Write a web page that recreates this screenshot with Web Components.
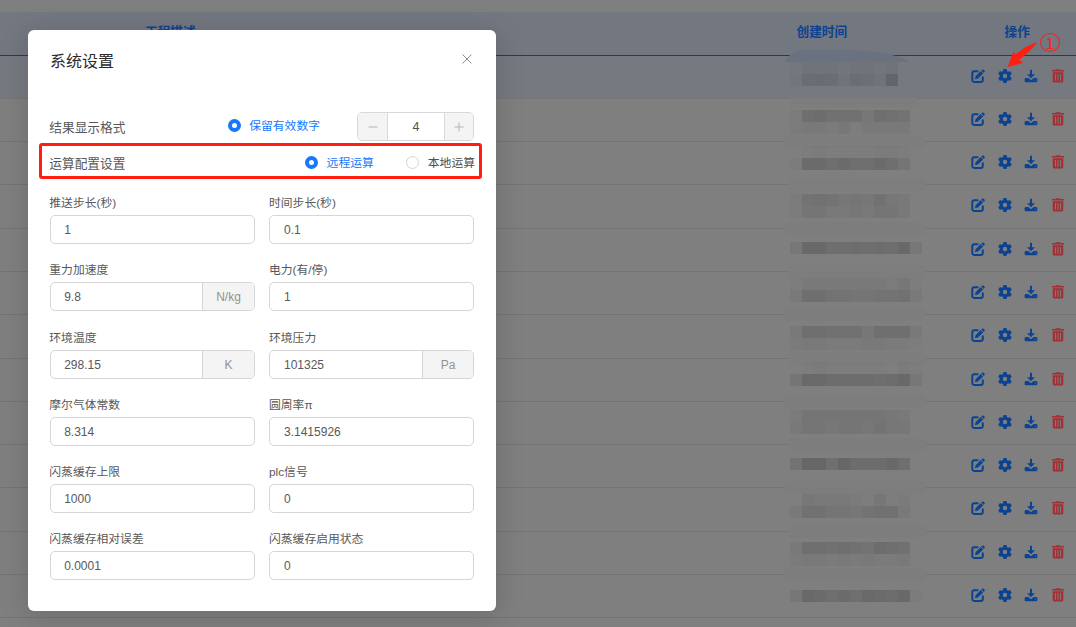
<!DOCTYPE html>
<html lang="zh-CN">
<head>
<meta charset="utf-8">
<title>系统设置</title>
<style>
html,body{margin:0;width:1076px;height:627px;overflow:hidden;background:#7f7f7f}
body{font-family:"Liberation Sans","Noto Sans CJK SC",sans-serif}
</style>
</head>
<body>
<settings-page></settings-page>
<script>
const define = (name, html, setup) => customElements.define(name, class extends HTMLElement {
  connectedCallback() {
    if (this.shadowRoot) return;
    const t = document.createElement('template');
    t.innerHTML = typeof html === 'function' ? html(this) : html;
    this.attachShadow({mode: 'open'}).append(t.content.cloneNode(true));
    if (setup) setup(this);
  }
});

const GLYPHS = {
  edit: '<svg viewBox="0 0 14 14"><path d="M6.600 2.300H3.200A2 2 0 0 0 1.300 4.300V11A2 2 0 0 0 3.200 12.900H9.800A2 2 0 0 0 11.800 11V8.300" fill="none" stroke="currentColor" stroke-width="2" stroke-linecap="round"/><path d="M3.900 10.300L4.600 7.200 9.700 2.100 12.100 4.500 7 9.600ZM10.300 1.500L11 .8Q11.900 0 12.700.8L13.400 1.500Q14.200 2.300 13.400 3.200L12.700 3.900Z" fill="currentColor"/></svg>',
  gear: '<svg viewBox="0 0 512 512"><path fill="currentColor" fill-rule="evenodd" d="M495.900 166.600c3.200 8.700 .5 18.400-6.400 24.600l-43.300 39.400c1.100 8.300 1.700 16.800 1.700 25.400s-.6 17.100-1.700 25.400l43.300 39.400c6.900 6.200 9.600 15.900 6.400 24.600c-4.400 11.900-9.700 23.300-15.800 34.300l-4.700 8.100c-6.600 11-14 21.400-22.100 31.200c-5.900 7.200-15.700 9.600-24.500 6.800l-55.700-17.700c-13.400 10.300-28.200 18.900-44 25.400l-12.500 57.100c-2 9.100-9 16.300-18.200 17.800c-13.800 2.300-28 3.500-42.500 3.500s-28.700-1.200-42.500-3.500c-9.200-1.500-16.200-8.700-18.200-17.800l-12.500-57.100c-15.800-6.500-30.600-15.100-44-25.400L83.100 425.900c-8.800 2.800-18.600 .3-24.500-6.800c-8.100-9.800-15.500-20.200-22.100-31.200l-4.700-8.100c-6.100-11-11.400-22.400-15.800-34.300c-3.200-8.700-.5-18.400 6.400-24.600l43.300-39.400C64.600 273.100 64 264.600 64 256s.6-17.100 1.700-25.400L22.400 191.200c-6.900-6.200-9.600-15.900-6.400-24.600c4.400-11.900 9.700-23.300 15.800-34.300l4.700-8.100c6.600-11 14-21.400 22.100-31.200c5.900-7.200 15.700-9.600 24.500-6.800l55.700 17.700c13.400-10.300 28.200-18.900 44-25.400l12.500-57.100c2-9.100 9-16.300 18.200-17.800C227.300 1.200 241.500 0 256 0s28.700 1.200 42.500 3.500c9.200 1.500 16.200 8.700 18.200 17.800l12.500 57.100c15.800 6.500 30.600 15.100 44 25.400l55.700-17.700c8.800-2.800 18.600-.3 24.500 6.800c8.100 9.800 15.500 20.200 22.100 31.200l4.700 8.100c6.100 11 11.400 22.400 15.800 34.300zM256 336a80 80 0 1 0 0-160 80 80 0 1 0 0 160z"/></svg>',
  download: '<svg viewBox="0 0 14 14"><path d="M6 .7H8V5.300H11L7 9.300 3 5.300H6Z" fill="currentColor"/><path fill-rule="evenodd" d="M2 9H4.300L7 11.200 9.700 9H12Q13.400 9 13.400 10.200V12Q13.400 13.300 12 13.300H2Q.6 13.300.6 12V10.200Q.6 9 2 9ZM10.900 10.700V11.500H11.900V10.700Z" fill="currentColor"/></svg>',
  trash: '<svg viewBox="0 0 14 14"><path d="M1 1H4.300L4.900.3H9.100L9.700 1H13V2.400H1Z" fill="currentColor"/><path fill-rule="evenodd" d="M1.700 3.200H12.300V12Q12.300 13.500 10.800 13.500H3.200Q1.700 13.500 1.700 12ZM4 5V11.700H4.900V5ZM6.550 5V11.700H7.450V5ZM9.100 5V11.700H10V5Z" fill="currentColor"/></svg>'
};
define('action-icon', el => `<style>:host{display:block;width:14px;height:14px;color:#0b4391}:host([name=trash]){color:#a23034}svg{display:block;width:14px;height:14px}</style>${GLYPHS[el.getAttribute('name')]}`);

define('table-head', `<style>
:host{display:flex;box-sizing:border-box;height:44px;border-bottom:1px solid #0c3f80;background:#73777f;color:#0b4391;font-size:12.7px;font-weight:700;line-height:40px}
.desc{width:796.500px;box-sizing:border-box;padding-left:145px}.time{width:208px}
</style><span class="desc">工程描述</span><span class="time">创建时间</span><span>操作</span>`);

define('table-row', `<style>
:host{display:flex;box-sizing:border-box;align-items:center;justify-content:flex-end;gap:12.700px;padding-right:11px;padding-bottom:3px;border-bottom:1px solid #747474}
:host([active]){background:#767a80}
</style><action-icon name="edit"></action-icon><action-icon name="gear"></action-icon><action-icon name="download"></action-icon><action-icon name="trash"></action-icon>`);

/* Pixelated block covering the timestamps: one hex digit of darkness per 12px cell. */
const MOSAIC = {
  62:'133323323', 74:'26763653b', 110:'2897774876', 122:'2332413333', 146:'0121111221', 158:'2aa8a88a85',
  194:'2676454743', 206:'2553343553', 242:'4bb889898b4', 278:'13333333241', 290:'38866556673', 326:'38877748883', 338:'23322233221',
  362:'01211111021', 374:'5bb999989b4', 410:'2555555543', 422:'3554554644', 458:'6cc8c999b8', 494:'0433321412', 506:'3775546773',
  542:'3887876987', 554:'2332323223', 590:'4ba8a8ba9b2'
};
define('time-mosaic', () => {
  let r = '';
  for (const [y, s] of Object.entries(MOSAIC)) [...s].forEach((c, i) => {
    const d = parseInt(c, 16);
    if (d) r += `<rect x="${5 + i * 12}" y="${y - 50}" width="12" height="12" fill="rgba(0,0,0,${(d * .0155).toFixed(3)})"/>`;
  });
  let veil = '';
  [141,184,228,271,314,358,401,444,487,531,574].forEach((y, i) => veil += `<rect x="${i % 2 ? 3 : 0}" y="${y - 56}" width="${i % 2 ? 138 : 140}" height="13" rx="4" fill="#7d7d7d"/>`);
  return `<style>:host{position:absolute;left:785px;top:50px}svg{display:block}</style>
  <svg width="145" height="570" shape-rendering="crispEdges"><path d="M-1 12Q5 2 17 0H64Q111 2 125 12Z" fill="#6a727f" shape-rendering="auto"/><rect x="5" y="48" width="127" height="9" fill="#7d7d7d"/>${veil}${r}</svg>`;
});

define('project-table', () => `<style>
:host{display:block;padding-top:12px;height:627px;box-sizing:border-box}
</style><table-head></table-head>${[43,43,43,44,43,43,44,43,43,43,44,43,43].map((h, i) => `<table-row ${i ? '' : 'active'} style="height:${h}px"></table-row>`).join('')}<time-mosaic></time-mosaic>`);

define('radio-option', `<style>
:host{display:flex;align-items:center;font-size:11.8px;line-height:16px;color:#4e4e4e;gap:8px;white-space:nowrap}
i{box-sizing:border-box;width:13px;height:13px;border:1px solid #d4d4d4;border-radius:50%;background:#fff}
span{padding-top:1px}
:host([checked]){color:#1677ff}:host([checked]) i{border:4.4px solid #1677ff}
</style><i></i><span><slot></slot></span>`);

define('number-stepper', `<style>
:host{display:grid;grid-template-columns:30px 1fr 29px;box-sizing:border-box;width:117px;height:29px;border:1px solid #d9d9d9;border-radius:5px;overflow:hidden;font-size:12.5px;color:#505050}
div{display:flex;align-items:center;justify-content:center}
.b{background:#f4f4f4}.b:first-of-type{border-right:1px solid #d9d9d9}.b:last-of-type{border-left:1px solid #d9d9d9}
svg{width:10px;height:10px;stroke:#b3b3b3}
</style><div class="b"><svg viewBox="0 0 10 10"><path d="M.5 5H9.500"/></svg></div><div><slot></slot></div><div class="b"><svg viewBox="0 0 10 10"><path d="M.5 5H9.500M5 .5V9.500"/></svg></div>`);

define('form-field', el => `<style>
:host{display:block;height:54px;color:#585858}
label{display:block;box-sizing:border-box;height:25px;padding-top:1px;margin-left:-.7px;line-height:24px;font-size:11.8px}
.box{box-sizing:border-box;display:flex;height:29px;border:1px solid #d6d6d6;border-radius:5px;overflow:hidden;font-size:12px;line-height:28px}
.value{flex:1;padding-left:13.200px}.unit{box-sizing:border-box;width:52px;border-left:1px solid #d6d6d6;background:#f4f4f4;color:#929292;text-align:center}
:host([unit=Pa]) .unit{width:51px}
:host(:nth-child(even)) label{margin-left:0}
:host(:nth-child(even)) .value{padding-left:14px}
</style><label>${el.getAttribute('label')}</label><div class="box"><span class="value"><slot></slot></span>${el.hasAttribute('unit') ? `<span class="unit">${el.getAttribute('unit')}</span>` : ''}</div>`);

const FIELDS = [['推送步长(秒)','1'],['时间步长(秒)','0.1'],['重力加速度','9.8','N/kg'],['电力(有/停)','1'],['环境温度','298.15','K'],['环境压力','101325','Pa'],
  ['摩尔气体常数','8.314'],['圆周率π','3.1415926'],['闪蒸缓存上限','1000'],['plc信号','0'],['闪蒸缓存相对误差','0.0001'],['闪蒸缓存启用状态','0']];
define('settings-dialog', () => `<style>
:host{position:absolute;left:28px;top:30px;width:468px;height:581px;box-sizing:border-box;padding:21px 22px 0;background:#fff;border-radius:6px;box-shadow:0 5px 28px 2px rgba(0,0,0,.14)}
header{display:flex;justify-content:space-between;height:61px;color:#2b2b2b;font-size:16px;line-height:21px}
header svg{width:10px;height:10px;margin:3px 2px 0;stroke:#909090}
.row{display:flex;align-items:center;font-size:12.7px;color:#585858}
.row>span{margin-left:-.7px}
.format{height:29px}.calc{height:43px}
.format radio-option{margin-left:auto;margin-right:37px;padding-bottom:2px}
.format>span{padding-bottom:1px}
.calc .first{margin-left:auto;margin-right:32px;gap:9px}.calc radio-option{padding-bottom:1px}
.calc radio-option:last-child{margin-right:-1px;gap:9px}
.grid{display:grid;grid-template-columns:205px 205px;column-gap:14px;row-gap:13.250px;padding-top:6.100px}
</style>
<header><span>系统设置</span><svg viewBox="0 0 10 10"><path d="M.5.5L9.500 9.500M9.500.5L.5 9.500"/></svg></header>
<div class="row format"><span>结果显示格式</span><radio-option checked>保留有效数字</radio-option><number-stepper>4</number-stepper></div>
<div class="row calc"><span class="name">运算配置设置</span><radio-option class="first" checked>远程运算</radio-option><radio-option>本地运算</radio-option></div>
<div class="grid">${FIELDS.map(([l, v, u]) => `<form-field label="${l}"${u ? ` unit="${u}"` : ''}>${v}</form-field>`).join('')}</div>`);

define('callout-marks', `<style>
.frame{position:absolute;box-sizing:border-box;left:39px;top:143px;width:443px;height:36px;border:3px solid #ff1e0f;border-radius:3px}
svg{position:absolute;left:1000px;top:36px}
.no{position:absolute;box-sizing:border-box;left:1040px;top:33px;width:20px;height:19px;border:1px solid #f3251b;border-radius:50%;color:#f3251b;font:15px/17px "Noto Sans CJK SC",sans-serif;text-align:center}
</style><div class="frame"></div><svg width="40" height="34"><path d="M36.500 6.500Q27 9 15.500 18.500L13.500 15.500 7.500 31 23 27 19.500 23.500Q28 17.500 36.500 7.500Z" fill="#ff1e12"/></svg><div class="no">1</div>`);

define('settings-page', `<style>:host{display:block;position:relative;width:1076px;height:627px;overflow:hidden}</style>
<project-table></project-table><settings-dialog></settings-dialog><callout-marks></callout-marks>`);
</script>
</body>
</html>
